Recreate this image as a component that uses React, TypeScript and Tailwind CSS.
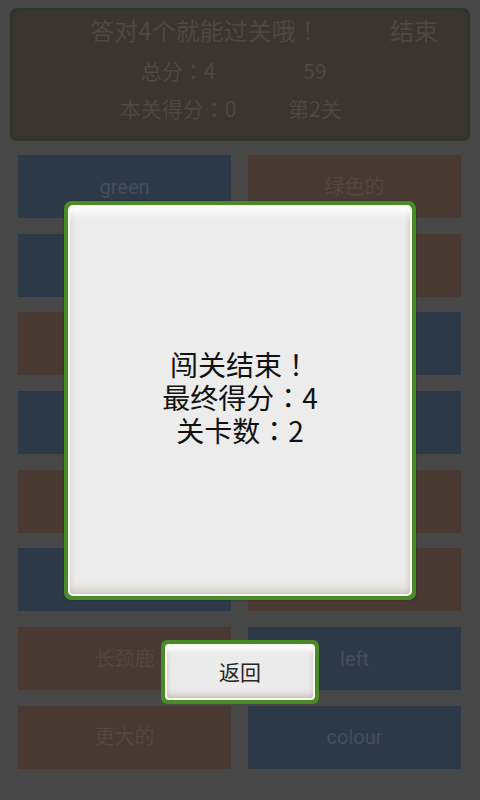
import React from "react";

const tiles: { label: string; c: "b" | "r" }[][] = [
  [{ label: "green", c: "b" }, { label: "绿色的", c: "r" }],
  [{ label: "", c: "b" }, { label: "", c: "r" }],
  [{ label: "", c: "r" }, { label: "", c: "b" }],
  [{ label: "", c: "b" }, { label: "", c: "b" }],
  [{ label: "", c: "r" }, { label: "", c: "r" }],
  [{ label: "", c: "b" }, { label: "", c: "r" }],
  [{ label: "长颈鹿", c: "r" }, { label: "left", c: "b" }],
  [{ label: "更大的", c: "r" }, { label: "colour", c: "b" }],
];

const cjk = { fontFamily: "'Noto Sans CJK SC', Roboto, sans-serif" };

function P({ ch }: { ch: string }) {
  return <span style={{ fontFamily: "'Noto Sans CJK TC', 'Noto Sans CJK SC', sans-serif" }}>{ch}</span>;
}

export default function App() {
  return (
    <div
      className="relative w-[480px] h-[800px] overflow-hidden bg-[#474747]"
      style={{ fontFamily: "Roboto, 'Noto Sans CJK SC', sans-serif" }}
    >
      <div className="pt-[8px] px-[10px]">
        <div className="h-[133px] rounded-[7px] border-[3px] border-[#2f3629] bg-[#3a3531] text-[#4c4843] flex flex-col" style={cjk}>
          <div className="relative h-[40px]">
            <div className="absolute left-[58px] w-[268px] text-center text-[24px] leading-none top-[7px]">答对4个就能过关哦<P ch="！" /></div>
            <div className="absolute left-[377px] text-[24px] leading-none top-[7px]">结束</div>
          </div>
          <div className="flex ml-[13px] justify-center h-[38px] items-center text-[21px] leading-none">
            <div className="w-[137px] text-center">总分<P ch="：" />4</div>
            <div className="w-[137px] text-center">59</div>
          </div>
          <div className="flex ml-[13px] justify-center h-[39px] items-center text-[21px] leading-none">
            <div className="w-[137px] text-center">本关得分<P ch="：" />0</div>
            <div className="w-[137px] text-center">第2关</div>
          </div>
        </div>
      </div>

      <div className="mt-[14px] pl-[18px] pr-[19px] grid grid-cols-2 gap-x-[17px] gap-y-[15.7px]">
        {tiles.flat().map((t, i) => (
          <div
            key={i}
            className={
              t.c === "b"
                ? "h-[63px] bg-[#2e3947] text-[#454e5b] flex items-center justify-center text-[20px]"
                : "h-[63px] bg-[#483a32] text-[#56473e] flex items-center justify-center text-[20px]"
            }
          >
            {t.label}
          </div>
        ))}
      </div>

      {/* dialog */}
      <div className="absolute left-[64px] top-[201px] w-[352px] h-[399px] rounded-[7px] bg-[#4b8a2a] p-[4px] shadow-[0_0_2px_rgba(0,0,0,0.4)]">
        <div
          className="w-full h-full rounded-[5px] border-[2px] border-[#faf6ec] bg-[#ececec] shadow-[inset_0_10px_8px_-4px_#ffffff,inset_0_-8px_8px_-4px_rgba(120,100,70,0.25),inset_4px_0_5px_-3px_rgba(140,120,90,0.2),inset_-4px_0_5px_-3px_rgba(140,120,90,0.3)] flex flex-col items-center justify-center pb-[6px] text-[#111111] text-[28px] leading-[33px]"
          style={cjk}
        >
          <div>闯关结束<P ch="！" /></div>
          <div>最终得分<P ch="：" />4</div>
          <div>关卡数<P ch="：" />2</div>
        </div>
      </div>

      {/* button */}
      <div className="absolute left-[161px] top-[640px] w-[158px] h-[64px] rounded-[6px] bg-[#4b8a2a] p-[4px]">
        <div
          className="w-full h-full rounded-[4px] border-[2px] border-[#faf6ec] bg-[#ebebeb] shadow-[inset_0_8px_6px_-4px_#ffffff,inset_0_-6px_6px_-3px_rgba(120,100,70,0.3),inset_3px_0_4px_-3px_rgba(140,120,90,0.25),inset_-3px_0_4px_-3px_rgba(140,120,90,0.3)] flex items-center justify-center text-[#262626] text-[21px]"
          style={cjk}
        >
          返回
        </div>
      </div>
    </div>
  );
}
